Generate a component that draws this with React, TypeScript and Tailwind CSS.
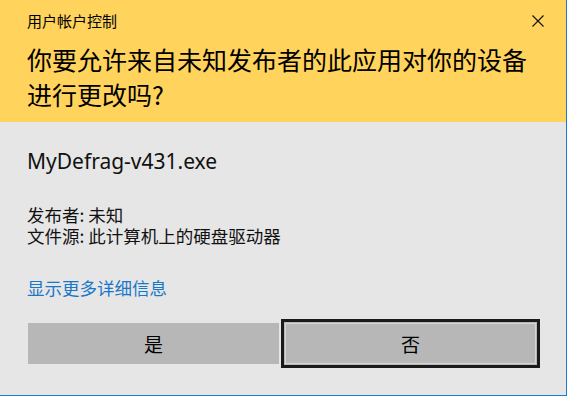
export default function App() {
  const cjk = { fontFamily: '"Noto Sans CJK SC", "Noto Sans", sans-serif' };

  return (
    <div
      className="w-[567px] h-[396px] bg-[#e6e6e6] border-r border-b border-[#1a7fd4] flex flex-col overflow-hidden text-black"
      style={cjk}
    >
      {/* 黄色标题区 */}
      <div className="h-[122px] shrink-0 bg-[#ffd35c] pl-[27px] pr-[22px] pt-[11px]">
        <div className="flex items-center justify-between h-[20px]">
          <span className="text-[15px] leading-[20px]">用户帐户控制</span>
          <svg width="12" height="12" viewBox="0 0 12 12" className="block">
            <path d="M0.5 0.5 L11.5 11.5 M11.5 0.5 L0.5 11.5" stroke="#111" strokeWidth="1.1" fill="none" />
          </svg>
        </div>
        <div className="mt-[11px] text-[25px] leading-[35px]">
          <div>你要允许来自未知发布者的此应用对你的设备</div>
          <div>进行更改吗?</div>
        </div>
      </div>

      {/* 正文 */}
      <div className="flex-1 pl-[27px] pt-[25px]">
        <div
          className="text-[21px] leading-[28px] text-[#111]"
          style={{ fontFamily: '"Noto Sans", "Noto Sans CJK SC", sans-serif' }}
        >
          MyDefrag-v431.exe
        </div>

        <div className="mt-[29px] text-[17.5px] leading-[21px] text-[#111]">
          <div>发布者: 未知</div>
          <div>文件源: 此计算机上的硬盘驱动器</div>
        </div>

        <div className="mt-[31px] text-[17.5px] leading-[21px] text-[#1a76c8]">显示更多详细信息</div>

        <div className="mt-[21px] flex items-center pl-px">
          <div className="w-[251px] h-[41px] bg-[#b7b7b7] flex items-center justify-center text-[19px] leading-none">
            是
          </div>
          <div className="ml-[2px] w-[259px] h-[49px] border-[3px] border-[#1a1a1a] bg-[#b7b7b7] p-px flex">
            <div className="flex-1 border border-[#d4d4d4] flex items-center justify-center text-[19px] leading-none">
              否
            </div>
          </div>
        </div>
      </div>
    </div>
  );
}
